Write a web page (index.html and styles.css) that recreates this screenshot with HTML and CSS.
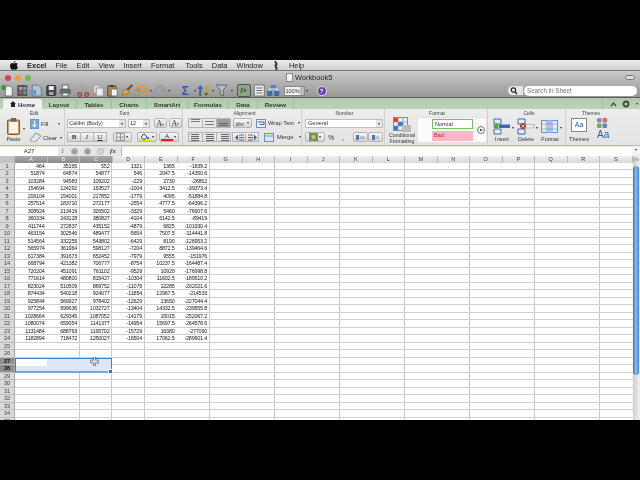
FILE: index.html
```html
<!DOCTYPE html>
<html lang="en">
  <head>
    <meta charset="UTF-8" />
    <title>Workbook5</title>
    <link rel="stylesheet" href="styles.css">
  </head>
  <body>
    <div class="app">
      <!-- mac menu bar -->
      <div class="menubar">
        <svg class="apple" width="8" height="9" viewBox="0 0 8 9"><path d="M5.5 0 C5.5 1.2 4.6 2 3.8 2 C3.8 1 4.6.2 5.5 0Z M4 2.4 C4.8 2.4 5.2 2 6 2 C6.700 2 7.300 2.400 7.700 3 C6.400 3.700 6.600 5.500 8 6 C7.500 7.400 6.600 8.800 5.700 8.800 C5 8.800 4.800 8.400 4 8.400 C3.200 8.400 3 8.800 2.300 8.800 C1.200 8.800 0 6.800 0 5 C0 3.200 1.100 2.100 2.300 2.100 C3 2.100 3.500 2.400 4 2.400Z" fill="#111"/></svg>
        <b>Excel</b><span>File</span><span>Edit</span><span>View</span><span>Insert</span><span>Format</span><span class="tools-item">Tools</span><span>Data</span><span>Window</span>
        <svg class="script" width="6" height="9" viewBox="0 0 6 9"><path d="M3 0 C1 1 5 2.500 3 4 C1 5 5 6 3 9" fill="none" stroke="#333" stroke-width="2"/></svg>
        <span>Help</span>
      </div>

      <!-- window title + toolbar -->
      <div class="chrome">
        <div class="titlebar">
          <div class="lights"><i class="red"></i><i class="amber"></i><i class="green"></i></div>
          <div class="title"><i class="doc"></i>Workbook5</div>
          <i class="pill"></i>
        </div>
        <div class="toolbar">
          <svg class="tool" viewBox="0 0 14 13"><path d="M5 2h5l2 2v8H5z" fill="#f4f4f4" stroke="#777"/><circle cx="3.500" cy="3.500" r="2.500" fill="#3a9a35"/></svg>
          <svg class="tool" viewBox="0 0 14 13"><rect x="2" y="1" width="10" height="11" fill="#4a5a66"/><rect x="4" y="3" width="3" height="3" fill="#d8a040"/><rect x="8" y="3" width="3" height="3" fill="#70a0c8"/><rect x="4" y="7" width="3" height="3" fill="#c05040"/><rect x="8" y="7" width="3" height="3" fill="#70a050"/></svg>
          <svg class="tool" viewBox="0 0 14 13"><path d="M3 1h6l3 3v8H3z" fill="#b4c6d6" stroke="#6a7d90"/><path d="M1 6h6v5H1z" fill="#6f9ac0"/></svg>
          <svg class="tool" viewBox="0 0 14 13"><rect x="2.500" y="1.500" width="9" height="10" rx="1" fill="#4a4d54" stroke="#333"/><rect x="4.500" y="2" width="5" height="4" fill="#eee"/><rect x="5" y="8" width="4" height="3" fill="#aaa"/></svg>
          <svg class="tool" viewBox="0 0 14 13"><rect x="4" y="1" width="6" height="4" fill="#f4f4f4" stroke="#666"/><rect x="1.500" y="5" width="11" height="5" rx="1" fill="#666a70"/><rect x="4" y="9" width="6" height="3" fill="#eee" stroke="#666"/></svg>
          <svg class="tool gap" viewBox="0 0 14 13"><path d="M4 1l6 8M10 1L4 9" stroke="#9aa0a6" stroke-width="1.200"/><circle cx="3.500" cy="10.500" r="1.800" fill="none" stroke="#b03030" stroke-width="1.200"/><circle cx="10.500" cy="10.500" r="1.800" fill="none" stroke="#b03030" stroke-width="1.200"/></svg>
          <svg class="tool" viewBox="0 0 14 13"><rect x="2" y="1" width="7" height="8" fill="#d8d8d8" stroke="#999"/><rect x="5" y="4" width="7" height="8" fill="#eee" stroke="#999"/></svg>
          <svg class="tool" viewBox="0 0 14 13"><rect x="2.500" y="2" width="8" height="10" fill="#b08a50" stroke="#5c4520"/><rect x="5" y="1" width="3" height="2" fill="#333"/><rect x="6" y="5" width="6" height="7" fill="#f4f4f4" stroke="#777"/></svg>
          <svg class="tool" viewBox="0 0 14 13"><path d="M12 1L7 6" stroke="#6a4a20" stroke-width="2"/><path d="M2 11c0-3 2-5 4-6l3 3c-1 2-4 3-7 3z" fill="#e2a93a" stroke="#75551a" stroke-width=".5"/></svg>
          <svg class="tool" viewBox="0 0 14 13"><path d="M3 7a4.500 4.500 0 1 1 4 4" fill="none" stroke="#d99a2a" stroke-width="2"/><path d="M0 5h6v4z" fill="#c88a20"/></svg>
          <i class="caret"></i>
          <svg class="tool dim" viewBox="0 0 14 13"><path d="M11 7a4.500 4.500 0 1 0-4 4" fill="none" stroke="#8f9aa6" stroke-width="2"/><path d="M14 5H8v4z" fill="#8f9aa6"/></svg>
          <i class="caret"></i>
          <span class="glyph sigma gap">Σ</span>
          <i class="caret"></i>
          <svg class="tool" viewBox="0 0 14 13"><path d="M3 1l3 4H4v7H2V5H0z" fill="#3a62b0"/><path d="M7 3h4L7 8h4" fill="none" stroke="#d89a20" stroke-width="1.300"/><path d="M9 12l-2-3h4z" fill="#555"/></svg>
          <i class="caret"></i>
          <svg class="tool" viewBox="0 0 14 13"><path d="M1 1h11L8 6v6L5 10V6z" fill="#b8bec6" stroke="#555" stroke-width=".8"/></svg>
          <i class="caret"></i>
          <span class="fx-btn">fx</span>
          <svg class="tool" viewBox="0 0 14 13"><rect x="2" y="1" width="10" height="11" fill="#eee" stroke="#777"/><path d="M4 4h6M4 6.500h6M4 9h6" stroke="#666"/></svg>
          <svg class="tool" viewBox="0 0 14 13"><rect x="1" y="7" width="5" height="5" fill="#3e6aa8"/><rect x="8" y="7" width="5" height="5" fill="#3e6aa8"/><rect x="4" y="1" width="6" height="5" fill="#5a86c0"/><path d="M3 7V5h8v2" fill="none" stroke="#eee"/></svg>
          <span class="zoom-box">100%<i></i></span>
          <i class="caret"></i>
          <span class="help">?</span>
          <span class="search">
            <span class="search-icon">
              <svg width="9" height="8" viewBox="0 0 9 8"><circle cx="3.500" cy="3" r="2.200" fill="none" stroke="#222" stroke-width="1.200"/><path d="M5 5l2 2" stroke="#222" stroke-width="1.400"/></svg>
            </span>
            <span class="search-field">Search in Sheet</span>
          </span>
        </div>
      </div>

      <!-- ribbon tabs -->
      <div class="tabs">
        <span class="tab active"><svg width="6" height="6" viewBox="0 0 6 6"><path d="M3 0l3 3H5v3H1V3H0z" fill="#222"/></svg>Home</span>
        <span class="tab w-layout">Layout</span>
        <span class="tab w-tables">Tables</span>
        <span class="tab w-charts">Charts</span>
        <span class="tab w-smart">SmartArt</span>
        <span class="tab w-formulas">Formulas</span>
        <span class="tab w-data">Data</span>
        <span class="tab w-review">Review</span>
        <span class="tab-tools">
          <svg width="7" height="5" viewBox="0 0 7 5"><path d="M1 4l2.500-3L6 4" fill="none" stroke="#444" stroke-width="1.200"/></svg>
          <svg width="8" height="8" viewBox="0 0 8 8"><circle cx="4" cy="4" r="2.500" fill="none" stroke="#444" stroke-width="1.800"/></svg>
          <i class="caret"></i>
        </span>
      </div>

      <!-- ribbon -->
      <div class="ribbon">
        <section class="group g-edit">
          <h4>Edit</h4>
          <div class="edit-body">
            <div class="paste">
              <svg width="13" height="17" viewBox="0 0 13 17"><rect x=".5" y="2" width="12" height="14.500" rx="1" fill="#c99f62" stroke="#7b5d30"/><rect x="2" y="4" width="9" height="11" fill="#f5f3ea"/><rect x="4" y="0" width="5" height="3.500" fill="#666"/></svg>
              <span>Paste</span>
            </div>
            <i class="caret paste-caret"></i>
            <div class="edit-cmds">
              <div class="cmd">
                <svg width="9" height="10" viewBox="0 0 9 10"><rect width="9" height="10" fill="#7aa8dc" stroke="#5f86b5"/><path d="M4.500 1.500v6M2.500 5.500l2 2.500 2-2.500" fill="none" stroke="#fff"/></svg>
                <span>Fill</span><i class="caret"></i>
              </div>
              <div class="cmd">
                <svg width="11" height="9" viewBox="0 0 11 9"><path d="M0 7l6-7 5 3-6 6H2z" fill="#e6e6ea" stroke="#8a8a92"/></svg>
                <span>Clear</span><i class="caret"></i>
              </div>
            </div>
          </div>
        </section>

        <section class="group g-font">
          <h4>Font</h4>
          <div class="line">
            <span class="combo font-name"><span>Calibri (Body)</span><i class="drop"></i></span>
            <span class="combo font-size"><span>12</span><i class="drop"></i></span>
            <span class="btn a-btn first">A<em>▴</em></span>
            <span class="btn a-btn">A<em>▾</em></span>
          </div>
          <div class="line">
            <span class="seg">
              <span class="btn s13 bold">B</span><span class="btn s13 ital">I</span><span class="btn s13 undl">U</span>
            </span>
            <span class="btn border-btn"><svg width="9" height="8" viewBox="0 0 9 8"><path d="M.5.5h8v7h-8zM4.500.5v7M.5 4h8" fill="none" stroke="#9a9a9a"/></svg><i class="caret"></i></span>
            <span class="btn color-btn"><span class="swatch yellow"><svg width="10" height="7" viewBox="0 0 10 7"><path d="M1 4l3-3 3 3-3 3z" fill="#eef" stroke="#2b55a0"/><path d="M8 4v2" stroke="#2b55a0" stroke-width="1.500"/></svg></span><i class="caret"></i></span>
            <span class="btn color-btn second"><span class="swatch redline">A</span><i class="caret"></i></span>
          </div>
        </section>

        <section class="group g-align">
          <h4>Alignment</h4>
          <div class="line">
            <span class="seg">
              <span class="btn s14 lines top"></span><span class="btn s14 lines mid"></span><span class="btn s14 lines low on"></span>
            </span>
            <span class="btn abc">abc<i class="caret"></i></span>
            <span class="cmd wrap">
              <svg width="10" height="9" viewBox="0 0 10 9"><rect x=".5" y=".5" width="9" height="8" fill="#e8eef8" stroke="#6f8fc0"/><path d="M2 3h6v2.500H4" fill="none" stroke="#3a64a8"/></svg>
              <span>Wrap Text</span><i class="caret"></i>
            </span>
          </div>
          <div class="line">
            <span class="seg">
              <span class="btn s14 lines left"></span><span class="btn s14 lines center"></span><span class="btn s14 lines right"></span>
            </span>
            <span class="seg indents">
              <span class="btn s13 indent"><svg width="9" height="7" viewBox="0 0 9 7"><path d="M0 3.500l3-3v6z" fill="#3a64a8"/><path d="M4 1h5M4 3.500h5M4 6h5" stroke="#666"/></svg></span><span class="btn s13 indent"><svg width="9" height="7" viewBox="0 0 9 7"><path d="M9 3.500l-3-3v6z" fill="#3a64a8"/><path d="M0 1h5M0 3.500h5M0 6h5" stroke="#666"/></svg></span>
            </span>
            <span class="cmd merge">
              <svg width="10" height="9" viewBox="0 0 10 9"><rect x=".5" y=".5" width="9" height="8" fill="#dfe9f6" stroke="#6f8fc0"/><path d="M.5 3h9" stroke="#6f8fc0"/></svg>
              <span>Merge</span><i class="caret"></i>
            </span>
          </div>
        </section>

        <section class="group g-number">
          <h4>Number</h4>
          <div class="line">
            <span class="combo num-format"><span>General</span><i class="drop"></i></span>
          </div>
          <div class="line">
            <span class="btn cur"><svg width="9" height="8" viewBox="0 0 9 8"><rect width="9" height="8" fill="#6f9a58"/><circle cx="4.500" cy="4" r="2" fill="#d8c860"/></svg><i class="caret"></i></span>
            <span class="btn pct">%</span>
            <span class="btn pct">,</span>
            <span class="btn dec first-dec"><i class="dots"></i>.00</span>
            <span class="btn dec"><i class="dots"></i>.0</span>
          </div>
        </section>

        <section class="group g-format">
          <h4>Format</h4>
          <div class="format-body">
            <div class="cond">
              <svg width="18" height="15" viewBox="0 0 18 15"><rect x=".5" y=".5" width="14" height="13" fill="#e8eef8" stroke="#6f8fc0"/><rect x="1" y="1" width="4" height="4" fill="#d84040"/><rect x="5" y="5" width="5" height="4" fill="#4a70c8"/><rect x="1" y="9" width="4" height="4" fill="#4a70c8"/><path d="M5 .5v13M10 .5v13M.5 5h14M.5 9h14" stroke="#6f8fc0" stroke-width=".6"/><rect x="9" y="8" width="9" height="7" fill="#bbb"/></svg>
              <span>Conditional<br />Formatting</span>
            </div>
            <div class="gallery">
              <div class="styles">
                <span class="style-normal">Normal</span>
                <span class="style-bad">Bad</span>
              </div>
              <span class="play"></span>
            </div>
          </div>
        </section>

        <section class="group g-cells">
          <h4>Cells</h4>
          <div class="cells-body">
            <div class="big">
              <svg width="18" height="17" viewBox="0 0 18 17"><path d="M1 1h7v5H1zM1 11h7v5H1z" fill="#e6eef8" stroke="#3d69ad"/><rect x="6" y="6.500" width="11" height="3.500" fill="#3d69ad"/><circle cx="3" cy="8" r="2.500" fill="#44b040"/></svg>
              <span>Insert</span>
            </div>
            <i class="caret cell-caret"></i>
            <div class="big">
              <svg width="18" height="17" viewBox="0 0 18 17"><path d="M1 1h7v5H1zM1 11h7v5H1z" fill="#e6eef8" stroke="#3d69ad"/><rect x="8" y="6.500" width="9" height="3.500" fill="#eee" stroke="#999" stroke-width=".6"/><circle cx="6" cy="8" r="3" fill="#b83028"/><path d="M4.500 6.500l3 3M7.500 6.500l-3 3" stroke="#fff" stroke-width=".8"/></svg>
              <span>Delete</span>
            </div>
            <i class="caret cell-caret"></i>
            <div class="big">
              <svg width="18" height="17" viewBox="0 0 18 17"><rect x=".5" y="2.500" width="16" height="12" fill="#e8ecf8" stroke="#6f8fc0"/><rect x="5" y="2.500" width="7" height="12" fill="#b4bfe8"/><path d="M.5 6h16M.5 11h16" stroke="#6f8fc0" stroke-width=".6"/></svg>
              <span>Format</span>
            </div>
            <i class="caret cell-caret"></i>
          </div>
        </section>

        <section class="group g-themes">
          <h4>Themes</h4>
          <div class="themes-body">
            <div class="big">
              <span class="theme-icon">Aa</span>
              <span>Themes</span>
            </div>
            <div class="theme-side">
              <svg width="10" height="10" viewBox="0 0 10 10"><rect width="4.500" height="4.500" rx="1" fill="#9a84b8"/><rect x="5.500" width="4.500" height="4.500" rx="1" fill="#d07068"/><rect y="5.500" width="4.500" height="4.500" rx="1" fill="#78a860"/><rect x="5.500" y="5.500" width="4.500" height="4.500" rx="1" fill="#5a88c0"/></svg>
              <span class="theme-font">Aa</span>
            </div>
          </div>
        </section>
      </div>

      <!-- formula bar -->
      <div class="formula">
        <span class="namebox">A27</span>
        <span class="grip">⁝</span>
        <i class="round"></i><i class="round"></i><i class="round flat"></i>
        <span class="fx">fx</span>
        <span class="input"></span>
        <i class="drop"></i>
      </div>

      <!-- sheet -->
      <div class="sheet">
        <div class="grid">
          <div class="colhead">
            <span class="corner"></span>
            <span class="sel">A</span><span class="sel">B</span><span class="sel">C</span>
            <span>D</span><span>E</span><span>F</span><span>G</span><span>H</span><span>I</span><span>J</span><span>K</span><span>L</span><span>M</span><span>N</span><span>O</span><span>P</span><span>Q</span><span>R</span><span>S</span>
          </div>
          <div class="row"><b>1</b><div class="cells"><span>464</span><span>35165</span><span>552</span><span>1321</span><span>1365</span><span>-1839.2</span></div></div>
          <div class="row"><b>2</b><div class="cells"><span>51874</span><span>64874</span><span>54877</span><span>546</span><span>2047.5</span><span>-14350.6</span></div></div>
          <div class="row"><b>3</b><div class="cells"><span>103284</span><span>94583</span><span>109202</span><span>-229</span><span>2730</span><span>-26862</span></div></div>
          <div class="row"><b>4</b><div class="cells"><span>154694</span><span>124292</span><span>163527</span><span>-1004</span><span>3412.5</span><span>-39373.4</span></div></div>
          <div class="row"><b>5</b><div class="cells"><span>206104</span><span>154001</span><span>217852</span><span>-1779</span><span>4095</span><span>-51884.8</span></div></div>
          <div class="row"><b>6</b><div class="cells"><span>257514</span><span>183710</span><span>272177</span><span>-2554</span><span>4777.5</span><span>-64396.2</span></div></div>
          <div class="row"><b>7</b><div class="cells"><span>308924</span><span>213419</span><span>326502</span><span>-3329</span><span>5460</span><span>-76907.6</span></div></div>
          <div class="row"><b>8</b><div class="cells"><span>360334</span><span>243128</span><span>380827</span><span>-4104</span><span>6142.5</span><span>-89419</span></div></div>
          <div class="row"><b>9</b><div class="cells"><span>411744</span><span>272837</span><span>435152</span><span>-4879</span><span>6825</span><span>-101930.4</span></div></div>
          <div class="row"><b>10</b><div class="cells"><span>463154</span><span>302546</span><span>489477</span><span>-5654</span><span>7507.5</span><span>-114441.8</span></div></div>
          <div class="row"><b>11</b><div class="cells"><span>514564</span><span>332255</span><span>543802</span><span>-6429</span><span>8190</span><span>-126953.2</span></div></div>
          <div class="row"><b>12</b><div class="cells"><span>565974</span><span>361964</span><span>598127</span><span>-7204</span><span>8872.5</span><span>-139464.6</span></div></div>
          <div class="row"><b>13</b><div class="cells"><span>617384</span><span>391673</span><span>652452</span><span>-7979</span><span>9555</span><span>-151976</span></div></div>
          <div class="row"><b>14</b><div class="cells"><span>668794</span><span>421382</span><span>706777</span><span>-8754</span><span>10237.5</span><span>-164487.4</span></div></div>
          <div class="row"><b>15</b><div class="cells"><span>720204</span><span>451091</span><span>761102</span><span>-9529</span><span>10920</span><span>-176998.8</span></div></div>
          <div class="row"><b>16</b><div class="cells"><span>771614</span><span>480800</span><span>815427</span><span>-10304</span><span>11602.5</span><span>-189510.2</span></div></div>
          <div class="row"><b>17</b><div class="cells"><span>823024</span><span>510509</span><span>869752</span><span>-11079</span><span>12285</span><span>-202021.6</span></div></div>
          <div class="row"><b>18</b><div class="cells"><span>874434</span><span>540218</span><span>924077</span><span>-11854</span><span>12967.5</span><span>-214533</span></div></div>
          <div class="row"><b>19</b><div class="cells"><span>925844</span><span>569927</span><span>978402</span><span>-12629</span><span>13650</span><span>-227044.4</span></div></div>
          <div class="row"><b>20</b><div class="cells"><span>977254</span><span>599636</span><span>1032727</span><span>-13404</span><span>14332.5</span><span>-239555.8</span></div></div>
          <div class="row"><b>21</b><div class="cells"><span>1028664</span><span>629345</span><span>1087052</span><span>-14179</span><span>15015</span><span>-252067.2</span></div></div>
          <div class="row"><b>22</b><div class="cells"><span>1080074</span><span>659054</span><span>1141377</span><span>-14954</span><span>15697.5</span><span>-264578.6</span></div></div>
          <div class="row"><b>23</b><div class="cells"><span>1131484</span><span>688763</span><span>1195702</span><span>-15729</span><span>16380</span><span>-277090</span></div></div>
          <div class="row"><b>24</b><div class="cells"><span>1182894</span><span>718472</span><span>1250027</span><span>-16504</span><span>17062.5</span><span>-289601.4</span></div></div>
          <div class="row"><b>25</b><div class="cells"></div></div>
          <div class="row"><b>26</b><div class="cells"></div></div>
          <div class="row"><b class="sel">27</b><div class="cells"></div></div>
          <div class="row"><b class="sel">28</b><div class="cells"></div></div>
          <div class="row"><b>29</b><div class="cells"></div></div>
          <div class="row"><b>30</b><div class="cells"></div></div>
          <div class="row"><b>31</b><div class="cells"></div></div>
          <div class="row"><b>32</b><div class="cells"></div></div>
          <div class="row"><b>33</b><div class="cells"></div></div>
          <div class="row"><b>34</b><div class="cells"></div></div>
          <div class="row"><b>35</b><div class="cells"></div></div>

          <!-- selection A27:C28 sits over the cells -->
          <div class="selection"><i class="active-cell"></i><i class="handle"></i></div>
          <svg class="cursor" width="9" height="9" viewBox="0 0 9 9"><path d="M3.500 0h2v3h3v3h-3v3h-2V6h-3V3h3z" fill="#d8d8d8" stroke="#666" stroke-width=".7"/></svg>
        </div>
        <div class="scrollbar">
          <i class="split"></i>
          <i class="thumb"></i>
        </div>
      </div>
    </div>
  </body>
</html>
```

FILE: styles.css
```css
body {
  margin: 0;
  background-color: #000;
  font-family: "Liberation Sans", Arial, sans-serif;
  overflow: hidden;
}
i,
em {
  font-style: normal;
}
.app {
  width: 640px;
  height: 360px;
  margin-top: 60px;
  display: flex;
  flex-direction: column;
  overflow: hidden;
  filter: blur(0.3px);
}

/* menu bar */
.menubar {
  height: 10px;
  flex-shrink: 0;
  display: flex;
  align-items: center;
  gap: 9.1px;
  padding-left: 10px;
  background: linear-gradient(#ececec, #cfcfcf);
  font-size: 7.4px;
  color: #222;
  box-sizing: border-box;
}
.tools-item {
  margin-left: 2px;
}
.script {
  margin: 0 1px;
}

/* title bar and toolbar */
.chrome {
  height: 28px;
  flex-shrink: 0;
  background: linear-gradient(#c9c9c9, #a6a6a6 70%, #979797);
  border-top: 1px solid #777;
  border-bottom: 1px solid #5f5f5f;
  box-sizing: border-box;
}
.titlebar {
  height: 13px;
  display: flex;
  align-items: center;
  padding: 0 5px;
  position: relative;
}
.lights {
  display: flex;
  gap: 4px;
}
.lights i {
  width: 6px;
  height: 6px;
  border-radius: 50%;
}
.red {
  background-color: #d8414a;
}
.amber {
  background-color: #e3a33a;
}
.green {
  background-color: #72bb3e;
}
.title {
  margin-left: 255px;
  display: flex;
  align-items: center;
  gap: 2px;
  font-size: 7.4px;
  color: #222;
}
.doc {
  width: 5px;
  height: 7px;
  background-color: #f4f4f4;
  border: 1px solid #888;
}
.pill {
  margin-left: auto;
  width: 8px;
  height: 3px;
  border: 1px solid #777;
  border-radius: 3px;
  background-color: #ddd;
}
.toolbar {
  height: 13px;
  display: flex;
  align-items: center;
}
.tool {
  width: 14.5px;
  height: 13px;
  flex-shrink: 0;
}
.tool.gap {
  margin-left: 3.5px;
}
.tool.dim {
  opacity: 0.8;
}
.caret {
  width: 0;
  height: 0;
  flex-shrink: 0;
  border-left: 1.5px solid transparent;
  border-right: 1.5px solid transparent;
  border-top: 2px solid #333;
  margin: 0 1px;
}
.glyph {
  width: 14.5px;
  text-align: center;
}
.sigma {
  font-size: 12px;
  font-weight: bold;
  color: #2f5ea8;
  margin-left: 7px;
}
.fx-btn {
  width: 12px;
  height: 11px;
  margin: 0 1px 0 3px;
  border: 1px solid #555;
  border-radius: 2px;
  background-color: #8aa684;
  color: #1f3a1d;
  font: italic bold 7px "Liberation Serif", serif;
  text-align: center;
  line-height: 11px;
}
.zoom-box {
  width: 18px;
  height: 8px;
  margin-left: 3px;
  display: flex;
  align-items: center;
  justify-content: space-between;
  padding-left: 1px;
  background-color: #f2f2f2;
  border: 1px solid #888;
  font-size: 5.5px;
  color: #333;
}
.zoom-box i {
  width: 4px;
  height: 8px;
  background-color: #bbb;
}
.help {
  width: 8px;
  height: 8px;
  margin-left: 8px;
  border-radius: 50%;
  background-color: #6a3fb0;
  border: 1px solid #ddd;
  color: #fff;
  font-size: 6px;
  font-weight: bold;
  text-align: center;
  line-height: 8px;
}
.search {
  margin-left: auto;
  margin-right: 3px;
  display: flex;
  align-items: center;
  gap: 1px;
}
.search-icon {
  width: 15px;
  height: 9px;
  display: flex;
  align-items: center;
  padding-left: 2px;
  box-sizing: border-box;
  background-color: #e6e6e6;
  border-radius: 5px 0 0 5px;
}
.search-field {
  width: 113px;
  height: 10px;
  padding-left: 3px;
  box-sizing: border-box;
  background-color: #fff;
  border-radius: 5px;
  font-size: 6.3px;
  line-height: 10px;
  color: #777;
}

/* tabs */
.tabs {
  height: 11px;
  flex-shrink: 0;
  display: flex;
  align-items: flex-end;
  padding-left: 3px;
  background: linear-gradient(#aec9a8, #bcd4b6);
  font-size: 6.2px;
  font-weight: bold;
  color: #333;
  box-sizing: border-box;
}
.tab {
  height: 10px;
  display: flex;
  align-items: center;
  justify-content: center;
  box-sizing: border-box;
  border-right: 1px solid #9fba99;
}
.tab.active {
  width: 39px;
  gap: 2px;
  background-color: #f0f0f0;
  border-radius: 2px 2px 0 0;
  border-right: none;
}
.w-layout,
.w-tables,
.w-charts {
  width: 35px;
}
.w-smart,
.w-formulas {
  width: 41px;
}
.w-data {
  width: 29px;
}
.w-review {
  width: 36px;
}
.tab-tools {
  margin-left: auto;
  height: 10px;
  display: flex;
  align-items: center;
  gap: 5px;
  padding: 0 1px 0 7px;
  border-left: 1px solid #9fba99;
}

/* ribbon */
.ribbon {
  height: 37px;
  flex-shrink: 0;
  display: flex;
  padding-left: 2px;
  background: linear-gradient(#ededed, #e3e3e3);
  border-bottom: 1px solid #a9c3a4;
  box-sizing: border-box;
  font-size: 6px;
  color: #333;
  overflow: hidden;
}
.group {
  box-sizing: border-box;
  border-right: 1px solid #d0d0d0;
  padding-left: 2px;
}
.group h4 {
  height: 6px;
  margin: 1px 0 2px;
  font-size: 5px;
  font-weight: normal;
  line-height: 6px;
  text-align: center;
  color: #444;
}
.g-edit {
  width: 63px;
}
.g-font {
  width: 118px;
}
.g-align {
  width: 119px;
  padding-left: 5px;
}
.g-number {
  width: 83px;
  padding-left: 3px;
}
.g-format {
  width: 103px;
}
.g-cells {
  width: 78px;
  padding-left: 5px;
}
.g-themes {
  width: 48px;
  border-right: none;
}
.line {
  height: 10px;
  display: flex;
  align-items: center;
}
.line + .line {
  margin-top: 4px;
}
.btn {
  height: 10px;
  flex-shrink: 0;
  display: flex;
  align-items: center;
  justify-content: center;
  box-sizing: border-box;
  background: linear-gradient(#f6f6f6, #d5d5d5);
  border: 1px solid #b4b4b4;
  border-radius: 2px;
  font-size: 6px;
}
.seg {
  display: flex;
  flex-shrink: 0;
}
.seg .btn {
  border-radius: 0;
  margin-right: -1px;
}
.s13 {
  width: 14px;
}
.s14 {
  width: 15px;
}
.bold {
  font: bold 7px "Liberation Serif", serif;
}
.ital {
  font: italic 7px "Liberation Serif", serif;
}
.undl {
  font: 7px "Liberation Serif", serif;
  text-decoration: underline;
}
.combo {
  height: 9px;
  display: flex;
  align-items: center;
  box-sizing: border-box;
  background-color: #fff;
  border: 1px solid #bdbdbd;
  font-size: 5.6px;
  padding-left: 1px;
  white-space: nowrap;
}
.combo span {
  flex: 1;
}
.drop {
  width: 6px;
  height: 100%;
  flex-shrink: 0;
  background: #e4e4e4;
  position: relative;
}
.drop::after {
  content: "";
  position: absolute;
  left: 1.5px;
  top: 3px;
  border-left: 1.5px solid transparent;
  border-right: 1.5px solid transparent;
  border-top: 2px solid #333;
}
.font-name {
  width: 59px;
}
.font-size {
  width: 22px;
  margin-left: 2px;
}
.a-btn {
  width: 13px;
  margin-left: 2px;
  font: 8px "Liberation Serif", serif;
}
.a-btn.first {
  margin-left: 4px;
}
.a-btn em {
  font-size: 4px;
  color: #4a78c0;
}
.border-btn {
  width: 19px;
  margin-left: 7px;
}
.color-btn {
  width: 20px;
  margin-left: 5px;
}
.color-btn.second {
  margin-left: 2px;
}
.swatch {
  width: 12px;
  height: 8px;
  box-sizing: border-box;
  display: flex;
  justify-content: center;
  align-items: center;
  font-size: 7px;
}
.yellow {
  border-bottom: 2px solid #ece023;
}
.redline {
  border-bottom: 2px solid #d22;
  font-family: "Liberation Serif", serif;
}
.lines {
  background-repeat: no-repeat;
  background-position: center;
}
.top {
  background-image: linear-gradient(#777 1px, transparent 1px, transparent 2px, #777 2px, #777 3px, transparent 3px);
  background-size: 9px 8px;
}
.mid {
  background-image: linear-gradient(transparent 2px, #777 2px, #777 3px, transparent 3px, transparent 5px, #777 5px, #777 6px, transparent 6px);
  background-size: 9px 8px;
}
.low.on {
  background-color: #9c9c9c;
  background-image: linear-gradient(transparent 4px, #666 4px, #666 5px, transparent 5px, transparent 6px, #666 6px, #666 7px, transparent 7px);
  background-size: 9px 8px;
}
.left,
.center,
.right {
  background-image: repeating-linear-gradient(#666 0 1px, transparent 1px 2px);
  background-size: 8px 7px;
}
.left {
  background-position: 2px center;
}
.right {
  background-position: 4px center;
}
.abc {
  width: 19px;
  margin-left: 3px;
  gap: 1px;
  font: 6.5px "Liberation Serif", serif;
}
.indents {
  margin-left: 2px;
}
.cmd {
  display: flex;
  align-items: center;
  gap: 2px;
  font-size: 5.8px;
  white-space: nowrap;
}
.wrap {
  margin-left: 4px;
}
.merge {
  margin-left: 6px;
}
.merge span {
  margin-left: 1px;
  margin-right: 3px;
}
.wrap span {
  margin-right: 1px;
}
.edit-body {
  display: flex;
}
.paste {
  width: 17px;
  display: flex;
  flex-direction: column;
  align-items: center;
  gap: 1px;
  margin-left: 1px;
  font-size: 5.5px;
}
.paste-caret {
  margin: 10px 3px 0 1px;
}
.edit-cmds {
  display: flex;
  flex-direction: column;
  gap: 3px;
  margin-left: 2px;
}
.edit-cmds .cmd {
  height: 11px;
}
.edit-cmds .cmd span {
  width: 14px;
}
.num-format {
  width: 78px;
  padding-left: 2px;
  background-color: #fff;
}
.cur {
  width: 20px;
}
.pct {
  width: 12px;
  border: none;
  background: none;
  font-size: 7px;
}
.dec {
  width: 15px;
  font-size: 4px;
  color: #555;
}
.first-dec {
  margin-left: 4px;
}
.dots {
  width: 3px;
  height: 5px;
  background-color: #4a78c0;
}
.format-body {
  display: flex;
  margin-top: -1px;
}
.cond {
  width: 30px;
  display: flex;
  flex-direction: column;
  align-items: center;
  font-size: 5.2px;
  line-height: 6px;
  text-align: center;
}
.gallery {
  width: 70px;
  height: 26px;
  display: flex;
  align-items: center;
  background-color: #fbfbfb;
  border: 1px solid #e2e2e2;
  box-sizing: border-box;
  padding-left: 14px;
}
.styles {
  display: flex;
  flex-direction: column;
  gap: 2px;
}
.style-normal,
.style-bad {
  width: 41px;
  height: 10px;
  box-sizing: border-box;
  padding-left: 2px;
  font-size: 5.5px;
  line-height: 9px;
}
.style-normal {
  border: 1px solid #77c068;
  background-color: #fff;
}
.style-bad {
  background-color: #f9b8c6;
  color: #a02828;
}
.play {
  width: 8px;
  height: 8px;
  margin-left: 4px;
  border: 1px solid #777;
  border-radius: 50%;
  box-sizing: border-box;
  background: #f4f4f4;
  position: relative;
}
.play::after {
  content: "";
  position: absolute;
  left: 2px;
  top: 1.5px;
  border-left: 3px solid #222;
  border-top: 1.5px solid transparent;
  border-bottom: 1.5px solid transparent;
}
.cells-body {
  display: flex;
}
.cell-caret {
  margin: 9px 3px 0 1px;
}
.themes-body {
  display: flex;
  gap: 7px;
}
.big {
  width: 18px;
  display: flex;
  flex-direction: column;
  align-items: center;
  gap: 1px;
  font-size: 5.5px;
}
.g-themes .big {
  margin-left: 2px;
}
.theme-icon {
  width: 16px;
  height: 14px;
  margin-bottom: 3px;
  box-sizing: border-box;
  border: 1px solid #888;
  background: #fff;
  color: #2a5ab0;
  font-size: 7px;
  text-align: center;
  line-height: 11px;
}
.theme-side {
  display: flex;
  flex-direction: column;
  gap: 1px;
  margin-left: 2px;
}
.theme-font {
  font-size: 10px;
  line-height: 11px;
  color: #2a5ab0;
}

/* formula bar */
.formula {
  height: 10px;
  flex-shrink: 0;
  display: flex;
  align-items: center;
  background: #e6e6e6;
  box-sizing: border-box;
  font-size: 6px;
  color: #333;
}
.namebox {
  width: 58px;
  height: 9px;
  background: #fff;
  text-align: center;
  line-height: 9px;
}
.grip {
  width: 10px;
  text-align: center;
  font-weight: bold;
}
.round {
  width: 7px;
  height: 7px;
  margin: 0 3px;
  border-radius: 50%;
  background: #9d9d9d;
  box-sizing: border-box;
  border: 1px solid #b8b8b8;
}
.round.flat {
  background: #d6d6d6;
}
.fx {
  width: 12px;
  font: italic bold 7px "Liberation Serif", serif;
  text-align: center;
}
.input {
  flex: 1;
  height: 9px;
  margin-left: 2px;
  background: #fff;
  border-left: 1px solid #bbb;
}
.formula .drop {
  width: 8px;
  background: #f2f2f2;
}
.formula .drop::after {
  left: 2.5px;
}

/* sheet */
.sheet {
  flex: 1;
  display: flex;
  min-height: 0;
  background-color: #fff;
}
.grid {
  width: 632.5px;
  position: relative;
  overflow: hidden;
}
.colhead {
  height: 6.5px;
  display: flex;
  background: linear-gradient(#efefef, #d8d8d8);
  box-sizing: border-box;
  font-size: 5.6px;
  line-height: 7px;
  color: #444;
}
.colhead span {
  width: 32.5px;
  box-sizing: border-box;
  border-right: 1px solid #bcbcbc;
  text-align: center;
}
.colhead .corner {
  width: 15px;
  background: #c4c4c4;
}
.colhead .sel {
  background: linear-gradient(#a8a8a8, #8c8c8c);
  color: #eee;
}
.row {
  height: 7.5px;
  display: flex;
}
.row b {
  width: 15px;
  flex-shrink: 0;
  box-sizing: border-box;
  background: #d9d9d9;
  border-bottom: 1px solid #bbb;
  border-right: 1px solid #aaa;
  font-size: 5.6px;
  font-weight: normal;
  line-height: 7px;
  text-align: center;
  color: #444;
}
.row b.sel {
  background: #8f8f8f;
  color: #111;
  font-weight: bold;
}
.cells {
  flex: 1;
  display: flex;
  box-sizing: border-box;
  border-bottom: 1px solid #cfcfcf;
  background: repeating-linear-gradient(90deg, transparent 0 31.5px, #c9c9c9 31.5px 32.5px);
  font-size: 5.5px;
  letter-spacing: -0.25px;
  line-height: 7px;
  color: #222;
}
.cells span {
  width: 32.5px;
  padding-right: 3px;
  box-sizing: border-box;
  text-align: right;
}
.selection {
  position: absolute;
  left: 15px;
  top: 201.5px;
  width: 97px;
  height: 15px;
  box-sizing: border-box;
  background-color: #dce8f7;
  border: 1px solid #4a7cc8;
  border-bottom: 2px solid #7ba6de;
}
.active-cell {
  display: block;
  width: 31px;
  height: 7px;
  background-color: #fff;
}
.handle {
  position: absolute;
  right: -2px;
  bottom: -3px;
  width: 3px;
  height: 3px;
  background-color: #3d6fc0;
  border: 1px solid #fff;
}
.cursor {
  position: absolute;
  left: 89.5px;
  top: 201px;
}
.scrollbar {
  flex: 1;
  display: flex;
  flex-direction: column;
  align-items: center;
  background: linear-gradient(90deg, #cfcfcf, #f2f2f2);
}
.split {
  width: 6px;
  height: 3px;
  margin: 2px 0 5px;
  background: #bbb;
}
.thumb {
  width: 6px;
  height: 209px;
  flex-shrink: 0;
  border-radius: 3px;
  background: linear-gradient(90deg, #2f74cc, #8fbdf0 50%, #3a80d6);
}
```
